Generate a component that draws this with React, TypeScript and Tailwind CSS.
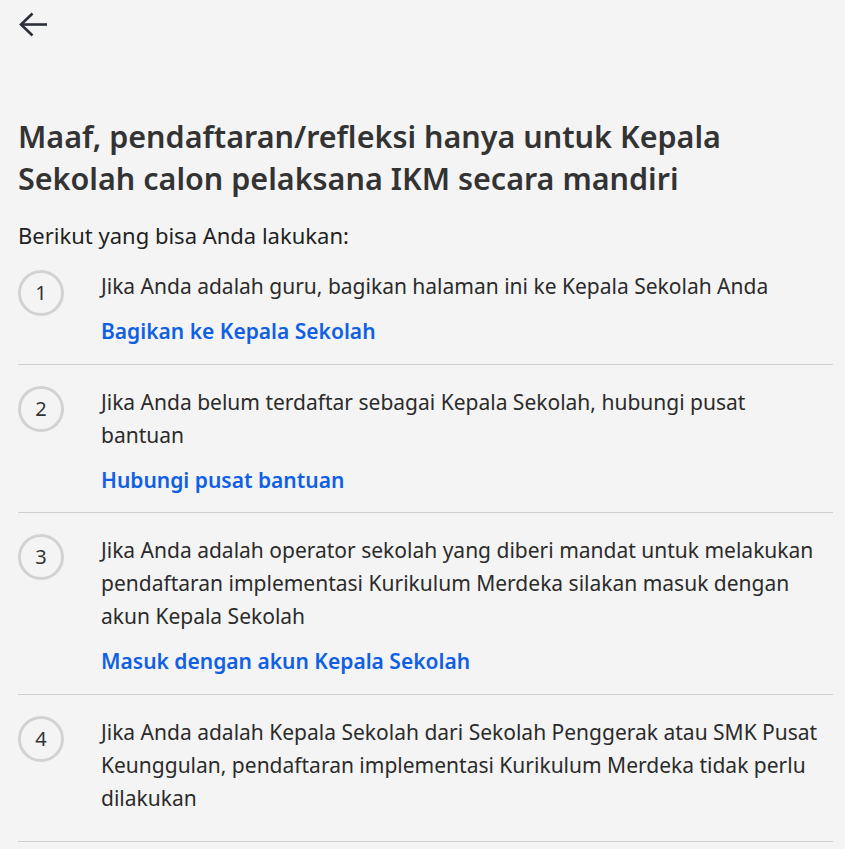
import React from 'react'

const STEPS: Array<{ text: string; link?: string }> = [
  {
    text: 'Jika Anda adalah guru, bagikan halaman ini ke Kepala Sekolah Anda',
    link: 'Bagikan ke Kepala Sekolah',
  },
  {
    text: 'Jika Anda belum terdaftar sebagai Kepala Sekolah, hubungi pusat bantuan',
    link: 'Hubungi pusat bantuan',
  },
  {
    text: 'Jika Anda adalah operator sekolah yang diberi mandat untuk melakukan pendaftaran implementasi Kurikulum Merdeka silakan masuk dengan akun Kepala Sekolah',
    link: 'Masuk dengan akun Kepala Sekolah',
  },
  {
    text: 'Jika Anda adalah Kepala Sekolah dari Sekolah Penggerak atau SMK Pusat Keunggulan, pendaftaran implementasi Kurikulum Merdeka tidak perlu dilakukan',
  },
]

function BackArrow() {
  return (
    <svg width="32" height="28" viewBox="0 0 32 28" fill="none" className="block">
      <path d="M4 12.5H30" stroke="#2b2f38" strokeWidth="2.6" />
      <path d="M15.5 1.5L4 12.5L15.5 23.5" stroke="#2b2f38" strokeWidth="2.6" />
    </svg>
  )
}

export default function App() {
  return (
    <div
      className="min-h-screen bg-[#f4f4f4] pl-[18px] pr-[12px] text-[#2b2b2b]"
      style={{ fontFamily: '"Noto Sans", "Open Sans", sans-serif' }}
    >
      <div className="pt-[12px]">
        <button className="-ml-[1px]">
          <BackArrow />
        </button>
      </div>

      <h1 className="mt-[69px] text-[30.5px] font-semibold leading-[42px] text-[#333]">
        Maaf, pendaftaran/refleksi hanya untuk Kepala Sekolah calon pelaksana IKM secara mandiri
      </h1>

      <p className="mt-[20px] text-[22px] leading-[32px] text-[#1f1f1f]">
        Berikut yang bisa Anda lakukan:
      </p>

      <ol className="mt-[2px]">
        {STEPS.map((s, i) => (
          <li
            key={i}
            className={`flex border-b border-[#cfcfcf] ${i === 0 ? 'pt-[17px]' : 'pt-[21px]'} ${s.link ? 'pb-[15.5px]' : 'pb-[26px]'}`}
          >
            <div className="w-[83px] shrink-0">
              <div className="flex h-[46px] w-[46px] items-center justify-center rounded-full border-[3px] border-[#d2d2d5] text-[20px] text-[#333]">
                {i + 1}
              </div>
            </div>
            <div className="flex-1">
              <p className="text-[21px] leading-[33px] text-[#2b2b2b]">{s.text}</p>
              {s.link && (
                <a href="#" className="mt-[12px] block text-[21px] font-semibold leading-[33px] text-[#1060e6]">
                  {s.link}
                </a>
              )}
            </div>
          </li>
        ))}
      </ol>
    </div>
  )
}
